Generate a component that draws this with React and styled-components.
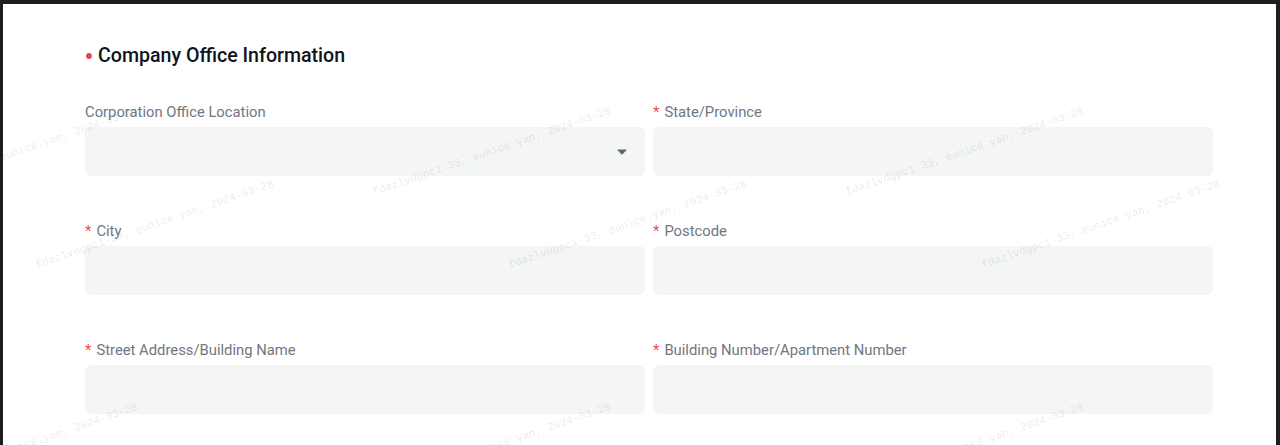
import React from "react";
import styled, { createGlobalStyle } from "styled-components";

const GlobalStyle = createGlobalStyle`
  html, body {
    margin: 0;
    padding: 0;
    background: #1e1e1e;
  }
  body {
    font-family: Roboto, "Noto Sans", Arial, sans-serif;
  }
  * {
    box-sizing: border-box;
  }
`;

const FIELDS = [
  { label: "Corporation Office Location", required: false, select: true },
  { label: "State/Province", required: true },
  { label: "City", required: true },
  { label: "Postcode", required: true },
  { label: "Street Address/Building Name", required: true },
  { label: "Building Number/Apartment Number", required: true },
];

const MARK_TEXT = "fdazlvdgpc1-33, eunice.yan, 2024-03-28";

// watermark rows: baseline y of the text start and first x
const MARK_ROWS = [
  { y: 192, x: -101 },
  { y: 265, x: 35 },
  { y: 488, x: -101 },
];
const MARK_STEP = 473;

const marks = MARK_ROWS.flatMap((row) =>
  [0, 1, 2].map((i) => ({ left: row.x + i * MARK_STEP, top: row.y }))
);

const Caret = () => (
  <svg width="10" height="6" viewBox="0 0 10 6">
    <path
      d="M1 0.5 H9 Q9.9 0.5 9.3 1.3 L5.6 5.3 Q5 5.9 4.4 5.3 L0.7 1.3 Q0.1 0.5 1 0.5 Z"
      fill="#5d6675"
    />
  </svg>
);

const Field = ({ label, required, select }) => (
  <StyledField>
    <StyledLabel>
      {required && <StyledStar>*</StyledStar>}
      {label}
    </StyledLabel>
    {select ? (
      <StyledSelect>
        <Caret />
      </StyledSelect>
    ) : (
      <StyledInput type="text" readOnly />
    )}
  </StyledField>
);

export default function App() {
  return (
    <>
      <GlobalStyle />
      <StyledFrame>
        <StyledContent>
          <StyledTitle>
            <StyledDot />
            Company Office Information
          </StyledTitle>
          <StyledGrid>
            {FIELDS.map((f) => (
              <Field key={f.label} {...f} />
            ))}
          </StyledGrid>
        </StyledContent>
        <StyledMarks>
          {marks.map((m, i) => (
            <StyledMark key={i} style={{ left: m.left, top: m.top - 10 }}>
              {MARK_TEXT}
            </StyledMark>
          ))}
        </StyledMarks>
      </StyledFrame>
    </>
  );
}

const StyledFrame = styled.div`
  position: relative;
  height: 445px;
  background: #ffffff;
  border-top: 4px solid #1e1e1e;
  border-left: 3px solid #1e1e1e;
  border-right: 4px solid #1e1e1e;
  overflow: hidden;
`;

const StyledContent = styled.div`
  padding: 39px 0 0 82px;
`;

const StyledTitle = styled.div`
  display: flex;
  align-items: center;
  gap: 6px;
  height: 26px;
  margin-left: 1px;
  margin-bottom: 31px;
  color: #10131b;
  font-size: 19.6px;
  font-weight: 500;
  line-height: 26px;
`;

const StyledDot = styled.span`
  width: 6px;
  height: 6px;
  border-radius: 50%;
  background: #f0474b;
`;

const StyledGrid = styled.div`
  display: grid;
  grid-template-columns: 560px 560px;
  column-gap: 8px;
  row-gap: 43px;
`;

const StyledField = styled.div`
  display: flex;
  flex-direction: column;
`;

const StyledLabel = styled.label`
  display: flex;
  align-items: center;
  height: 23px;
  padding-top: 1px;
  margin-bottom: 4px;
  color: #707782;
  font-size: 14.8px;
  line-height: 22px;
`;

const StyledStar = styled.span`
  color: #f04b4b;
  margin-right: 5px;
`;

const StyledInput = styled.input`
  display: block;
  width: 100%;
  height: 49px;
  padding: 0 12px;
  border: none;
  outline: none;
  border-radius: 6px;
  background: #f4f5f5;
  font-family: inherit;
  font-size: 14px;
`;

const StyledSelect = styled.div`
  display: flex;
  align-items: center;
  justify-content: flex-end;
  height: 49px;
  padding-right: 18px;
  border-radius: 6px;
  background: #f4f5f5;
`;

const StyledMarks = styled.div`
  position: absolute;
  inset: 0;
  pointer-events: none;
`;

const StyledMark = styled.span`
  position: absolute;
  white-space: nowrap;
  font-family: "Liberation Mono", "DejaVu Sans Mono", monospace;
  font-size: 11px;
  line-height: 12px;
  color: rgba(0, 0, 0, 0.1);
  transform: rotate(-19deg);
  transform-origin: 0 100%;
`;
